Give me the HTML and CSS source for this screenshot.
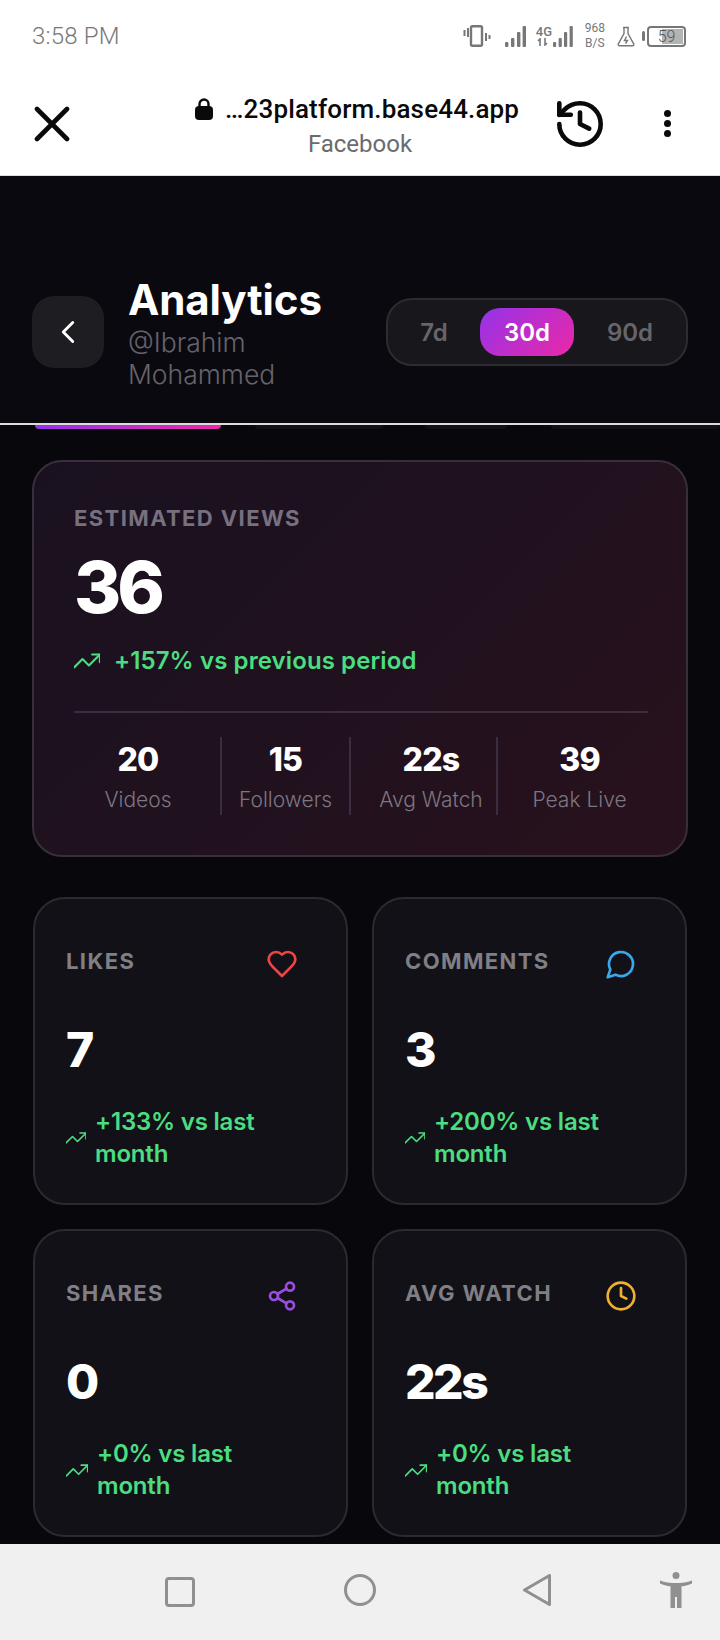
FILE: index.html
```html
<!DOCTYPE html>
<html lang="en">
  <head>
    <meta charset="UTF-8" />
    <meta name="viewport" content="width=device-width, initial-scale=1.0" />
    <title>Analytics</title>
    <link rel="stylesheet" href="styles.css">
  </head>
  <body>
    <div class="phone">
      <div class="status-bar">
        <span class="status-time">3:58 PM</span>
        <div class="status-icons">
          <svg class="st-vibrate" width="28" height="22" viewBox="0 0 28 22" fill="none" stroke="#777">
            <rect x="8" y="1.2" width="11" height="19.6" rx="1.5" stroke-width="2.4"/>
            <path d="M1.5 5v6M5 3v9M23 8v8M26.5 10v4" stroke-width="2"/>
          </svg>
          <svg class="st-signal" width="21" height="21" viewBox="0 0 21 21" fill="#777">
            <rect x="0" y="16" width="3.4" height="5" rx="1"/>
            <rect x="6" y="12" width="3.4" height="9" rx="1"/>
            <rect x="12" y="6" width="3.4" height="15" rx="1"/>
            <rect x="17.6" y="0" width="3.4" height="21" rx="1"/>
          </svg>
          <div class="st-data">
            <div class="st-data-left">
              <span class="st-4g">4G</span>
              <svg width="14" height="8" viewBox="0 0 14 8" fill="none" stroke="#777" stroke-width="1.6">
                <path d="M4 8V1L2 3M9 0v7l2-2"/>
              </svg>
            </div>
            <svg width="20" height="21" viewBox="0 0 20 21" fill="#777">
              <rect x="0" y="16" width="3.2" height="5" rx="1"/>
              <rect x="5.6" y="12" width="3.2" height="9" rx="1"/>
              <rect x="11" y="6" width="3.2" height="15" rx="1"/>
              <rect x="16.6" y="0" width="3.2" height="21" rx="1"/>
            </svg>
          </div>
          <div class="st-speed"><span>968</span><span>B/S</span></div>
          <svg class="st-flask" width="18" height="21" viewBox="0 0 18 21" fill="none" stroke="#777" stroke-width="1.4">
            <path d="M6 1.5h6M7 1.5v6L1.5 17.5a1.4 1.4 0 0 0 1.2 2.3h12.6a1.4 1.4 0 0 0 1.2-2.3L11 7.500v-6"/>
            <path d="M9.500 10.500 7.500 14.500h3L8.500 17.500"/>
          </svg>
          <div class="st-nub"></div>
          <div class="st-battery">
            <span class="st-battery-fill"></span>
            <span class="st-battery-text">59</span>
          </div>
        </div>
      </div>

      <div class="browser-bar">
        <svg class="close-icon" width="36" height="36" viewBox="0 0 36 36" fill="none" stroke="#0a0a0a" stroke-width="4.6" stroke-linecap="round">
          <path d="M3 3l30 30M33 3 3 33"/>
        </svg>
        <div class="browser-title">
          <div class="browser-url">
            <svg width="18" height="22" viewBox="0 0 18 22">
              <path d="M4.500 9V6a4.500 4.500 0 0 1 9 0v3" fill="none" stroke="#0a0a0a" stroke-width="2.400"/>
              <rect x="0" y="8" width="18" height="14" rx="4" fill="#0a0a0a"/>
            </svg>
            <span>…23platform.base44.app</span>
          </div>
          <div class="browser-site">Facebook</div>
        </div>
        <svg class="history-icon" width="46" height="46" viewBox="2 2 20 20" fill="none" stroke="#0a0a0a" stroke-width="2" stroke-linecap="round" stroke-linejoin="round">
          <path d="M3 12a9 9 0 1 0 9-9 9.750 9.750 0 0 0-6.740 2.740L3 8"/>
          <path d="M3 3v5h5"/>
          <path d="M12 7v5l4 2"/>
        </svg>
        <div class="dots"><i></i><i></i><i></i></div>
      </div>

      <div class="screen">
        <header class="top-header">
          <button class="back-btn">
            <svg width="38" height="38" viewBox="0 0 24 24" fill="none" stroke="#fff" stroke-width="1.8" stroke-linecap="round" stroke-linejoin="round">
              <path d="m15 18-6-6 6-6"/>
            </svg>
          </button>
          <div class="head-text">
            <h1>Analytics</h1>
            <p>@Ibrahim Mohammed</p>
          </div>
          <div class="range">
            <span class="range-item range-7">7d</span>
            <span class="range-item range-active">30d</span>
            <span class="range-item range-90">90d</span>
          </div>
        </header>
        <div class="tab-peek">
          <span class="peek-active"></span>
          <span class="peek-a"></span>
          <span class="peek-b"></span>
          <span class="peek-c"></span>
        </div>

        <section class="hero">
          <div class="hero-label">ESTIMATED VIEWS</div>
          <div class="hero-value">36</div>
          <div class="hero-trend">
            <svg width="26" height="18" viewBox="2 5 20 14" fill="none" stroke="#4ade80" stroke-width="1.600" stroke-linecap="round" stroke-linejoin="round">
              <path d="M22 7l-8.500 8.500-5-5L2 17"/>
              <path d="M16 7h6v6"/>
            </svg>
            <span>+157% vs previous period</span>
          </div>
          <div class="hero-stats">
            <div class="stat"><b>20</b><span>Videos</span></div>
            <div class="stat"><b>15</b><span>Followers</span></div>
            <div class="stat"><b>22s</b><span>Avg Watch</span></div>
            <div class="stat"><b>39</b><span>Peak Live</span></div>
          </div>
        </section>

        <section class="cards">
          <div class="card">
            <div class="card-head">
              <span class="card-label">LIKES</span>
              <span class="card-icon">
                <svg width="32" height="32" viewBox="0 0 24 24" fill="none" stroke="#ef4444" stroke-width="2" stroke-linecap="round" stroke-linejoin="round">
                  <path d="M19 14c1.490-1.460 3-3.210 3-5.500A5.500 5.500 0 0 0 16.500 3c-1.760 0-3 .5-4.500 2-1.500-1.500-2.740-2-4.500-2A5.500 5.500 0 0 0 2 8.500c0 2.300 1.500 4.050 3 5.500l7 7Z"/>
                </svg>
              </span>
            </div>
            <div class="card-value">7</div>
            <div class="card-trend">
              <svg width="20" height="14" viewBox="2 5 20 14" fill="none" stroke="#4ade80" stroke-width="1.600" stroke-linecap="round" stroke-linejoin="round">
                <path d="M22 7l-8.500 8.500-5-5L2 17"/>
                <path d="M16 7h6v6"/>
              </svg>
              <span>+133% vs last month</span>
            </div>
          </div>

          <div class="card">
            <div class="card-head">
              <span class="card-label">COMMENTS</span>
              <span class="card-icon">
                <svg width="32" height="32" viewBox="0 0 24 24" fill="none" stroke="#38a8e8" stroke-width="2" stroke-linecap="round" stroke-linejoin="round">
                  <path d="M7.900 20A9 9 0 1 0 4 16.100L2 22Z"/>
                </svg>
              </span>
            </div>
            <div class="card-value">3</div>
            <div class="card-trend">
              <svg width="20" height="14" viewBox="2 5 20 14" fill="none" stroke="#4ade80" stroke-width="1.600" stroke-linecap="round" stroke-linejoin="round">
                <path d="M22 7l-8.500 8.500-5-5L2 17"/>
                <path d="M16 7h6v6"/>
              </svg>
              <span>+200% vs last month</span>
            </div>
          </div>

          <div class="card">
            <div class="card-head">
              <span class="card-label">SHARES</span>
              <span class="card-icon">
                <svg width="32" height="32" viewBox="0 0 24 24" fill="none" stroke="#9b4de0" stroke-width="2" stroke-linecap="round" stroke-linejoin="round">
                  <circle cx="18" cy="5" r="3"/>
                  <circle cx="6" cy="12" r="3"/>
                  <circle cx="18" cy="19" r="3"/>
                  <path d="m8.590 13.510 6.830 3.980M15.410 6.510l-6.820 3.980"/>
                </svg>
              </span>
            </div>
            <div class="card-value">0</div>
            <div class="card-trend">
              <svg width="22" height="15" viewBox="2 5 20 14" fill="none" stroke="#4ade80" stroke-width="1.600" stroke-linecap="round" stroke-linejoin="round">
                <path d="M22 7l-8.500 8.500-5-5L2 17"/>
                <path d="M16 7h6v6"/>
              </svg>
              <span>+0% vs last month</span>
            </div>
          </div>

          <div class="card">
            <div class="card-head">
              <span class="card-label">AVG WATCH</span>
              <span class="card-icon">
                <svg width="32" height="32" viewBox="0 0 24 24" fill="none" stroke="#eeb02f" stroke-width="2" stroke-linecap="round" stroke-linejoin="round">
                  <circle cx="12" cy="12" r="10"/>
                  <path d="M12 6v6l4 2"/>
                </svg>
              </span>
            </div>
            <div class="card-value">22s</div>
            <div class="card-trend">
              <svg width="22" height="15" viewBox="2 5 20 14" fill="none" stroke="#4ade80" stroke-width="1.600" stroke-linecap="round" stroke-linejoin="round">
                <path d="M22 7l-8.500 8.500-5-5L2 17"/>
                <path d="M16 7h6v6"/>
              </svg>
              <span>+0% vs last month</span>
            </div>
          </div>
        </section>
      </div>

      <nav class="nav-bar">
        <svg class="nav-square" width="30" height="30" viewBox="0 0 30 30" fill="none" stroke="#909090" stroke-width="3">
          <rect x="1.500" y="1.500" width="27" height="27" rx="2.500"/>
        </svg>
        <svg class="nav-circle" width="32" height="32" viewBox="0 0 32 32" fill="none" stroke="#909090" stroke-width="3">
          <circle cx="16" cy="16" r="14.500"/>
        </svg>
        <svg class="nav-back" width="28" height="32" viewBox="0 0 28 32" fill="none" stroke="#909090" stroke-width="3" stroke-linejoin="round">
          <path d="M26.500 1.500v29L1.500 16Z"/>
        </svg>
        <svg class="nav-access" width="32" height="36" viewBox="0 0 32 36" fill="#909090">
          <circle cx="16" cy="3.500" r="3.500"/>
          <path d="M0 8.500C5 10.500 10 11 16 11s11-.5 16-2.500v3C29 13 25.500 14 21.500 14.300V36H17V25h-2v11h-4.500V14.300C6.500 14 3 13 0 11.500Z"/>
        </svg>
      </nav>
    </div>
  </body>
</html>
```

FILE: styles.css
```css
:root {
  --bg: #08070c;
  --header-bg: #0a0910;
  --green: #4ade80;
  --card-bg: #121118;
  --card-border: #2b2a30;
}

* {
  box-sizing: border-box;
}

html,
body {
  margin: 0;
  height: 100%;
}

body {
  font-family: "Inter", "Liberation Sans", sans-serif;
  background-color: var(--bg);
}

.phone {
  width: 720px;
  height: 1640px;
  display: flex;
  flex-direction: column;
  overflow: hidden;
}

/* status bar */

.status-bar {
  height: 72px;
  flex: none;
  display: flex;
  align-items: center;
  justify-content: space-between;
  padding: 0 34px 0 32px;
  background-color: #fff;
  font-family: "Roboto", sans-serif;
  color: #777;
}

.status-time {
  font-size: 24px;
  font-weight: 300;
  letter-spacing: 0.2px;
}

.status-icons {
  display: flex;
  align-items: center;
}

.st-signal {
  margin-left: 14px;
}

.st-data {
  display: flex;
  align-items: flex-end;
  margin-left: 10px;
  gap: 1px;
}

.st-data-left {
  display: flex;
  flex-direction: column;
  width: 16px;
  height: 21px;
}

.st-4g {
  font-size: 13px;
  line-height: 12px;
  font-weight: 500;
}

.st-speed {
  display: flex;
  flex-direction: column;
  align-items: center;
  margin-left: 12px;
  font-size: 12px;
  line-height: 15px;
}

.st-flask {
  margin-left: 12px;
}

.st-nub {
  width: 3px;
  height: 10px;
  margin-left: 7px;
  background-color: #777;
  border-radius: 2px;
}

.st-battery {
  position: relative;
  width: 39px;
  height: 21px;
  margin-left: 2px;
  border: 2px solid #777;
  border-radius: 4px;
  display: flex;
  align-items: center;
  justify-content: center;
}

.st-battery-fill {
  position: absolute;
  top: 1px;
  right: 1px;
  bottom: 1px;
  width: 21px;
  background-color: #b4b4b4;
}

.st-battery-text {
  position: relative;
  font-size: 16px;
  font-weight: 300;
  color: #555;
}

/* browser bar */

.browser-bar {
  height: 104px;
  flex: none;
  display: flex;
  align-items: center;
  padding-left: 34px;
  background-color: #fff;
  border-bottom: 1px solid #ddd;
  font-family: "Roboto", sans-serif;
}

.close-icon {
  width: 36px;
  flex: none;
}

.browser-title {
  width: 330px;
  margin-left: 125px;
  margin-top: 5px;
}

.browser-url {
  display: flex;
  align-items: center;
  gap: 12px;
  font-size: 26px;
  line-height: 30px;
  font-weight: 500;
  letter-spacing: 0.15px;
  color: #0a0a0a;
  white-space: nowrap;
}

.browser-site {
  margin-top: 5px;
  text-align: center;
  font-size: 24px;
  line-height: 30px;
  color: #6b6b6b;
}

.history-icon {
  flex: none;
  margin-left: 32px;
}

.dots {
  display: flex;
  flex-direction: column;
  gap: 3px;
  margin-left: 61px;
}

.dots i {
  display: block;
  width: 7px;
  height: 7px;
  border-radius: 50%;
  background-color: #0a0a0a;
}

/* screen */

.screen {
  flex: 1;
  min-height: 0;
  overflow: hidden;
}

.top-header {
  height: 249px;
  display: flex;
  align-items: flex-start;
  padding: 120px 32px 0;
  background-color: var(--header-bg);
  border-bottom: 2px solid #dcdcdc;
}

.back-btn {
  width: 72px;
  height: 72px;
  flex: none;
  display: flex;
  align-items: center;
  justify-content: center;
  padding: 0;
  border: 0;
  border-radius: 22px;
  background-color: #1e1d22;
}

.head-text {
  width: 180px;
  margin-left: 24px;
  margin-top: -24px;
}

.head-text h1 {
  margin: 0;
  font-size: 42px;
  line-height: 56px;
  font-weight: 700;
  color: #fff;
  letter-spacing: -0.1px;
  white-space: nowrap;
}

.head-text p {
  margin: 0;
  margin-top: -2px;
  font-size: 26.5px;
  line-height: 32px;
  font-weight: 300;
  color: #66636b;
}

.range {
  margin-left: auto;
  height: 68px;
  margin-top: 2px;
  display: flex;
  align-items: center;
  gap: 8px;
  padding: 0 8px;
  background-color: #17171c;
  border: 2px solid #2c2c31;
  border-radius: 26px;
}

.range-item {
  width: 94px;
  height: 48px;
  display: flex;
  align-items: center;
  justify-content: center;
  font-size: 24px;
  font-weight: 600;
  color: #66656b;
  border-radius: 20px;
}

.range-7 {
  width: 76px;
}

.range-90 {
  width: 96px;
}

.range-active {
  color: #fff;
  background: linear-gradient(135deg, #9333ea, #ec28a8);
}

.tab-peek {
  display: flex;
  height: 4px;
}

.tab-peek span {
  display: block;
  height: 4px;
  border-radius: 0 0 16px 16px;
  background-color: #111116;
}

.tab-peek .peek-active {
  width: 186px;
  margin-left: 35px;
  background: linear-gradient(90deg, #9333ea, #ec28a8);
}

.peek-a {
  width: 128px;
  margin-left: 34px;
}

.peek-b {
  width: 82px;
  margin-left: 42px;
}

.peek-c {
  width: 169px;
  margin-left: 44px;
}

.hero {
  height: 397px;
  margin: 31px 32px 0;
  padding: 40px 38px 0 40px;
  border: 2px solid #382e3c;
  border-radius: 30px;
  background: linear-gradient(135deg, #1a1120, #22111e 60%, #28111c);
}

.hero-label {
  font-size: 22px;
  line-height: 32px;
  font-weight: 700;
  letter-spacing: 1.4px;
  color: #77707f;
}

.hero-value {
  margin-top: 13px;
  font-size: 72px;
  line-height: 80px;
  font-weight: 800;
  letter-spacing: -4px;
  color: #fff;
}

.hero-trend {
  display: flex;
  align-items: center;
  gap: 14px;
  margin-top: 16px;
  font-size: 24px;
  line-height: 36px;
  font-weight: 600;
  letter-spacing: 0.1px;
  color: var(--green);
}

.hero-stats {
  display: grid;
  grid-template-columns: 148px 129px 147px 1fr;
  margin-top: 32px;
  padding-top: 24px;
  border-top: 2px solid #3a2d40;
}

.stat {
  height: 78px;
  display: flex;
  flex-direction: column;
  align-items: center;
  padding-top: 1px;
  border-right: 2px solid #3a2d40;
}

.stat:nth-child(1) {
  padding-right: 18px;
}

.stat:nth-child(3) {
  padding-left: 15px;
}

.stat:last-child {
  padding-left: 13px;
  border-right: 0;
}

.stat b {
  font-size: 32px;
  line-height: 44px;
  font-weight: 800;
  letter-spacing: -0.8px;
  color: #fff;
}

.stat span {
  margin-top: 2px;
  font-size: 21px;
  line-height: 32px;
  font-weight: 300;
  color: #7c7682;
  white-space: nowrap;
}

/* metric cards */

.cards {
  display: grid;
  grid-template-columns: 1fr 1fr;
  gap: 24px;
  margin: 40px 33px 0;
}

.card {
  height: 308px;
  padding: 33px 0 0 31px;
  background-color: var(--card-bg);
  border: 2px solid var(--card-border);
  border-radius: 32px;
}

.card-head {
  display: flex;
  align-items: center;
  justify-content: space-between;
  padding-right: 32px;
}

.card-label {
  padding-bottom: 6px;
  font-size: 22px;
  font-weight: 700;
  letter-spacing: 1.4px;
  color: #807f84;
}

.card-icon {
  display: flex;
  padding: 16px;
}

.card-value {
  margin-top: 26px;
  font-size: 48px;
  line-height: 56px;
  font-weight: 800;
  letter-spacing: -2.5px;
  color: #fff;
}

.card-trend {
  display: flex;
  align-items: center;
  gap: 9px;
  margin-top: 28px;
  width: 240px;
  font-size: 24px;
  line-height: 32px;
  font-weight: 600;
  letter-spacing: -0.2px;
  color: var(--green);
}

.card-trend svg {
  flex: none;
}

.card-trend span {
  flex: 1;
}

/* nav bar */

.nav-bar {
  height: 96px;
  flex: none;
  display: flex;
  align-items: center;
  background-color: #f0f0f0;
}

.nav-square {
  margin-left: 165px;
}

.nav-circle {
  margin-left: 149px;
  margin-top: -4px;
}

.nav-back {
  margin-left: 147px;
  margin-top: -4px;
}

.nav-access {
  margin-left: 109px;
  margin-top: -4px;
}
```
